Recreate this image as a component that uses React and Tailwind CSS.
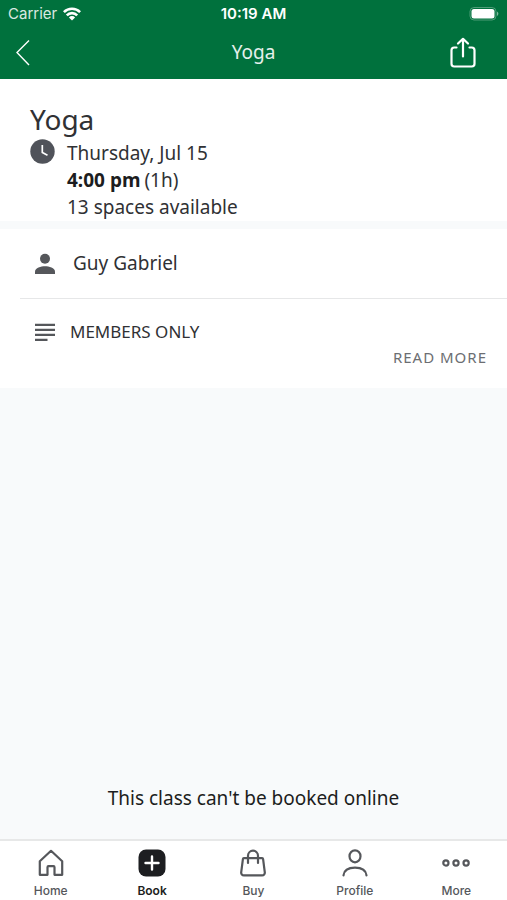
import React from "react";

const tabs = [
  { name: "Home", icon: HomeIcon },
  { name: "Book", icon: BookIcon, active: true },
  { name: "Buy", icon: BagIcon },
  { name: "Profile", icon: ProfileIcon },
  { name: "More", icon: MoreIcon },
];

function HomeIcon() {
  return (
    <svg className="size-7" viewBox="0 0 28 28" fill="none" stroke="currentColor" strokeWidth="2.2">
      <path d="M2.8 12.2 14 1.8l11.2 10.4v13.6h-7.7v-7.6a1 1 0 0 0-1-1h-5a1 1 0 0 0-1 1v7.6H2.8Z" strokeLinejoin="round" />
    </svg>
  );
}

function BookIcon() {
  return (
    <svg className="size-7" viewBox="0 0 28 28" fill="none">
      <rect x="0.5" y="0.5" width="27" height="27" rx="7.5" fill="currentColor" />
      <path d="M14 7.5v13M7.5 14h13" stroke="white" strokeWidth="2.4" strokeLinecap="round" />
    </svg>
  );
}

function BagIcon() {
  return (
    <svg className="size-7" viewBox="0 0 28 28" fill="none" stroke="currentColor" strokeWidth="2.2" strokeLinecap="round">
      <path d="M4.900 9.200h18.200a1 1 0 0 1 1 .9l1.700 13.200a2.700 2.700 0 0 1-2.700 3.100H4.900a2.700 2.700 0 0 1-2.700-3.100L3.900 10.100a1 1 0 0 1 1-.9Z" strokeLinejoin="round" />
      <path d="M9 14V6.700a5 5 0 0 1 10 0V14" />
    </svg>
  );
}

function ProfileIcon() {
  return (
    <svg className="size-7" viewBox="0 0 28 28" fill="none" stroke="currentColor" strokeWidth="2.2" strokeLinecap="round">
      <ellipse cx="14" cy="7.300" rx="5.500" ry="6" />
      <path d="M2.500 26.300c.6-5.300 5-7.700 11.500-7.700s10.900 2.400 11.500 7.700" />
    </svg>
  );
}

function MoreIcon() {
  return (
    <svg className="size-7" viewBox="0 0 28 28" fill="none" stroke="currentColor" strokeWidth="2.2">
      <circle cx="3.900" cy="14" r="2.600" />
      <circle cx="14" cy="14" r="2.600" />
      <circle cx="24.100" cy="14" r="2.600" />
    </svg>
  );
}

function StatusBar() {
  return (
    <div className="grid h-7 grid-cols-3 items-center px-2 font-['Inter',sans-serif] text-[15px]">
      <div className="flex items-center gap-1.5">
        <span className="opacity-85">Carrier</span>
        <svg className="h-3.5 w-[18px]" viewBox="0 0 18 14" fill="none" stroke="currentColor" strokeWidth="2.600">
          <path d="M.9 5.100a11.500 11.500 0 0 1 16.200 0M3.800 8.300a7.300 7.300 0 0 1 10.400 0" />
          <path d="M9 13.500 5.900 10.400a4.400 4.400 0 0 1 6.200 0Z" fill="currentColor" stroke="none" />
        </svg>
      </div>
      <span className="text-center font-semibold">10:19 AM</span>
      <svg className="h-3.5 w-[30px] justify-self-end" viewBox="0 0 30 14" fill="none">
        <rect x="1" y="0.500" width="26" height="12.500" rx="4" stroke="white" strokeOpacity="0.3" />
        <rect x="2.500" y="2" width="23" height="9.500" rx="2.500" fill="white" />
        <path d="M28 4.500a2.600 2.600 0 0 1 0 4.600Z" fill="white" fillOpacity="0.5" />
      </svg>
    </div>
  );
}

const Header = () => (
  <header className="bg-[#00713d] text-white">
    <StatusBar />
    <div className="grid h-[51px] grid-cols-3 items-center pb-0.5">
      <button type="button" aria-label="Back" className="ml-4 w-3.5">
        <svg className="h-7 w-3.5" viewBox="0 0 14 28" fill="none" stroke="currentColor" strokeWidth="1.400">
          <path d="M13 1.500 1 13.500 13 26" />
        </svg>
      </button>
      <h1 className="text-center text-[19px] text-white/90">Yoga</h1>
      <button type="button" aria-label="Share" className="mr-[30px] justify-self-end">
        <svg className="h-8 w-7" viewBox="0 0 28 32" fill="none" stroke="currentColor" strokeWidth="2.200" strokeLinecap="round" strokeLinejoin="round">
          <path d="M7.500 10.500H5.200a2.700 2.700 0 0 0-2.700 2.700v13.600a2.700 2.700 0 0 0 2.700 2.700h17.600a2.700 2.700 0 0 0 2.700-2.700V13.200a2.700 2.700 0 0 0-2.700-2.700h-2.300" />
          <path d="M14 19.500V2M9 6.500l5-4.700 5 4.700" />
        </svg>
      </button>
    </div>
  </header>
);

const App = () => {
  return (
    <div className="flex min-h-screen flex-col bg-[#f8fafb] font-['Noto_Sans',sans-serif] text-[#303134]">
      <Header />

      <main className="flex flex-1 flex-col">
        {/* Class summary */}
        <section className="bg-white px-[30px] pt-5">
          <h2 className="text-[28px] leading-10">Yoga</h2>
          <div className="flex gap-3">
            <svg className="size-[25px] shrink-0 text-[#50535a]" viewBox="0 0 25 25" fill="none">
              <circle cx="12.500" cy="12.500" r="12.200" fill="currentColor" />
              <path d="M12.300 6v7.500l5.200 2.700" stroke="white" strokeWidth="1.700" />
            </svg>
            <div className="pt-px text-[19px] leading-[27px]">
              <p>Thursday, Jul 15</p>
              <p className="flex gap-1">
                <strong className="text-[#1c1d20]">4:00 pm</strong>
                <span>(1h)</span>
              </p>
              <p>13 spaces available</p>
            </div>
          </div>
        </section>

        {/* Instructor and description */}
        <section className="mt-2 bg-white pl-5">
          <div className="flex h-[70px] items-center gap-4 border-b border-[#e6e7e8] pl-3.5">
            <svg className="size-[22px] text-[#55575b]" viewBox="0 0 22 22" fill="currentColor">
              <circle cx="11" cy="5.800" r="5" />
              <path d="M1 21v-2.500c0-3.600 6-5.300 10-5.300s10 1.700 10 5.300V21Z" />
            </svg>
            <p className="pl-px text-[19px]">Guy Gabriel</p>
          </div>
          <div className="flex items-center gap-3.5 pl-3.5 pt-5">
            <svg className="size-[22px] text-[#55575b]" viewBox="0 0 22 22" stroke="currentColor" strokeWidth="2.200">
              <path d="M1 3.800h20M1 8.800h20M1 13.800h20M1 18.800h12.500" />
            </svg>
            <p className="text-[17px] leading-[26px]">MEMBERS ONLY</p>
          </div>
          <div className="flex justify-end pb-[19px] pr-5">
            <button type="button" className="text-[15px] leading-6 tracking-[1px] text-[#6c6e72]">
              READ MORE
            </button>
          </div>
        </section>

        <p className="mt-auto pb-[27px] text-center text-[19px] leading-[27px] text-[#1c1d20]">
          This class can't be booked online
        </p>
      </main>

      <nav className="grid h-[61px] grid-cols-5 border-t-2 border-[#e7e8e8] bg-white font-['Inter',sans-serif]">
        {tabs.map(({ name, icon: Icon, active }) => (
          <a
            key={name}
            href={`#${name.toLowerCase()}`}
            aria-current={active ? "page" : undefined}
            className={`flex flex-col items-center gap-1.5 pt-2 text-xs leading-4 ${
              active ? "font-semibold text-[#1d1e21]" : "font-medium text-[#55575b]"
            }`}
          >
            <Icon />
            {name}
          </a>
        ))}
      </nav>
    </div>
  );
};

export default App;
